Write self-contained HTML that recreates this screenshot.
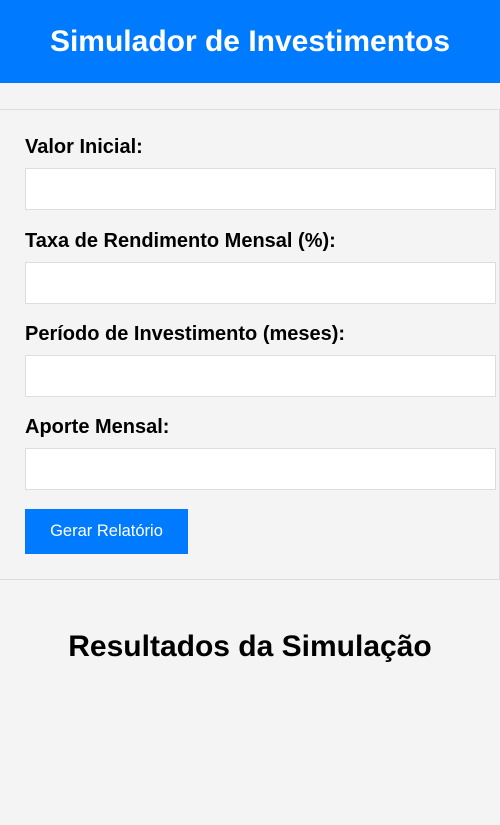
<!DOCTYPE html>
<html><head><meta charset="utf-8"><style>
*{box-sizing:border-box;margin:0;padding:0}
body{width:500px;height:825px;background:#f4f4f4;font-family:"Liberation Sans",Arial,sans-serif;position:relative;overflow:hidden}
header{position:absolute;left:0;top:0;width:500px;height:83px;background:#007bff;color:#fff;font-weight:bold;font-size:30px;text-align:center;line-height:83px}
.form{position:absolute;left:-1px;top:109px;width:501px;height:471px;border:1px solid #ddd;background:#f4f4f4}
.lbl{position:absolute;left:25px;font-weight:bold;font-size:20px;color:#000;line-height:22px}
.inp{position:absolute;left:25px;width:471px;height:42px;background:#fff;border:1px solid #ddd}
.btn{position:absolute;left:25px;top:509px;width:163px;height:45px;background:#007bff;color:#fff;font-size:16.5px;text-align:center;line-height:45px}
h2{position:absolute;left:0;top:630px;width:500px;text-align:center;font-size:30px;font-weight:bold;color:#000}
</style></head><body>
<header>Simulador de Investimentos</header>
<div class="form"></div>
<div class="lbl" style="top:136px">Valor Inicial:</div>
<div class="inp" style="top:168px"></div>
<div class="lbl" style="top:230px">Taxa de Rendimento Mensal (%):</div>
<div class="inp" style="top:262px"></div>
<div class="lbl" style="top:323px">Período de Investimento (meses):</div>
<div class="inp" style="top:355px"></div>
<div class="lbl" style="top:416px">Aporte Mensal:</div>
<div class="inp" style="top:448px"></div>
<div class="btn">Gerar Relatório</div>
<h2>Resultados da Simulação</h2>
</body></html>
